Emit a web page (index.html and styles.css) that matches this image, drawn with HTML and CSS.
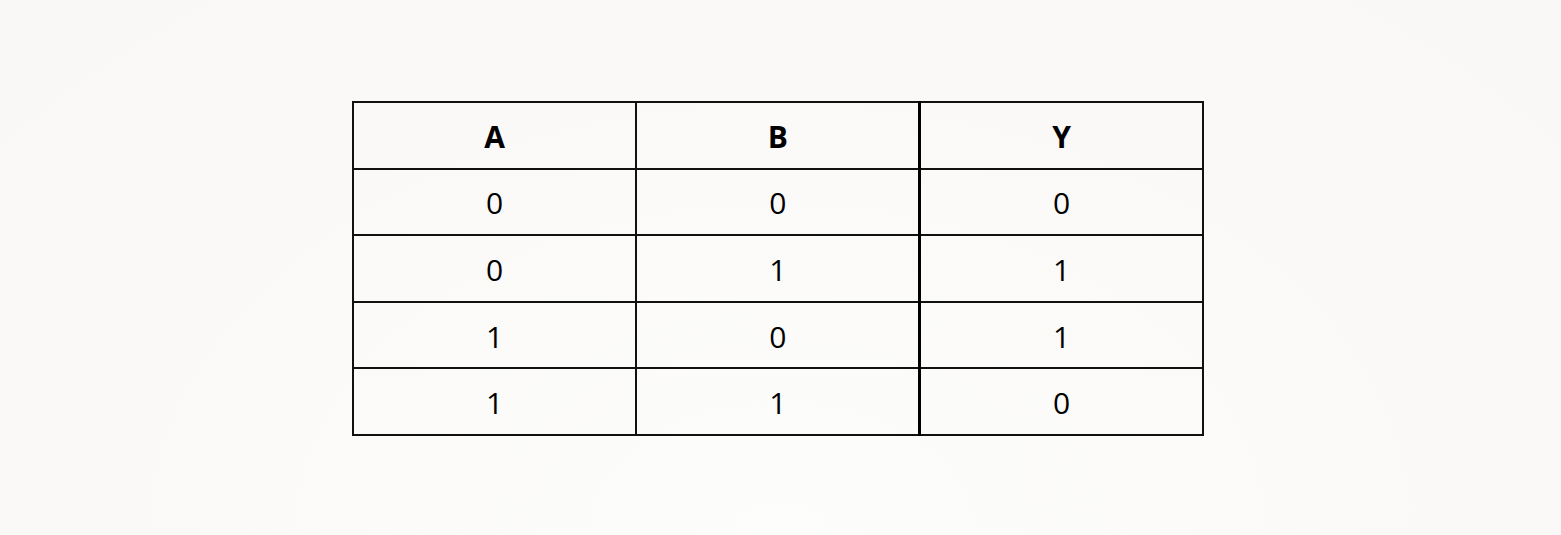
FILE: index.html
```html
<!DOCTYPE html>
<html>
<head>
<meta charset="utf-8">
<link rel="stylesheet" href="styles.css">
</head>
<body>
<main class="page">
  <table class="truth">
    <thead>
      <tr><th>A</th><th class="sep">B</th><th>Y</th></tr>
    </thead>
    <tbody>
      <tr><td>0</td><td class="sep">0</td><td>0</td></tr>
      <tr><td>0</td><td class="sep">1</td><td>1</td></tr>
      <tr><td>1</td><td class="sep">0</td><td>1</td></tr>
      <tr><td>1</td><td class="sep">1</td><td>0</td></tr>
    </tbody>
  </table>
</main>
</body>
</html>
```
FILE: styles.css
```css
html, body {
  margin: 0;
  padding: 0;
  height: 100%;
}
body {
  background: radial-gradient(ellipse at 50% 100%, #fdfdfc 0%, #faf9f7 60%, #f9f8f6 100%);
  font-family: "Open Sans", "Noto Sans", sans-serif;
  color: #000;
}
.page {
  padding-top: 101px;
  padding-left: 352px;
}
.truth {
  border-collapse: collapse;
  width: 852px;
  table-layout: fixed;
  border: 2px solid #000;
}
.truth th, .truth td {
  border: 2px solid #111;
  height: 61.6px;
  padding: 3px 0 0;
  text-align: center;
  vertical-align: middle;
  font-size: 30px;
  line-height: 1;
}
.truth th {
  font-weight: 700;
}
.truth td {
  font-weight: 400;
}
.truth .sep {
  border-right: 3px solid #000;
}
```
